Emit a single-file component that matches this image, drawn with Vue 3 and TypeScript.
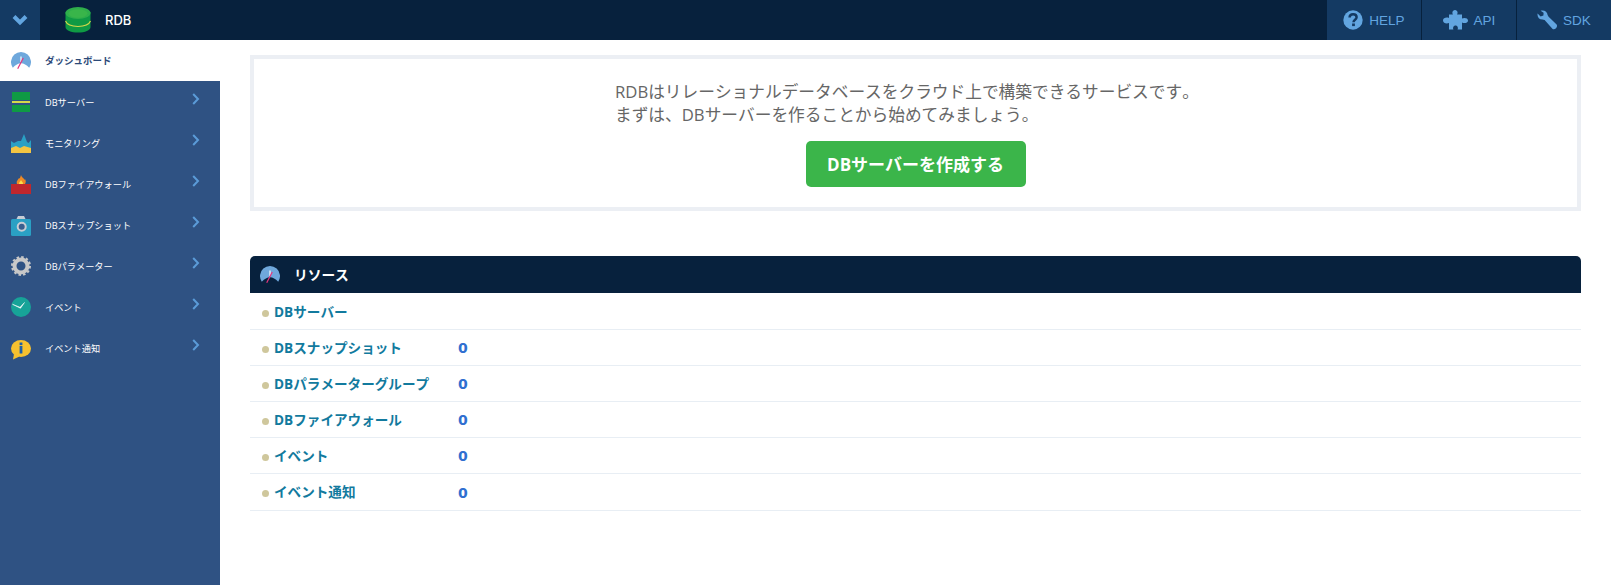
<template>
  <div class="app">
    <header class="topbar">
      <button class="toggle" aria-label="menu">
        <svg width="16" height="12" viewBox="0 0 16 12">
          <path d="M2 2.5 L8 8.5 L14 2.5" fill="none" stroke="#62a5e0" stroke-width="4" />
        </svg>
      </button>
      <div class="brand">
        <svg class="brand-icon" width="26" height="26" viewBox="0 0 26 26">
          <path d="M0.5 5 V20 C0.5 23.5 6 25.5 13 25.5 S25.5 23.5 25.5 20 V5 Z" fill="#0f9a44" />
          <path d="M0.5 14 C2 18 7 19.5 13 19.5 S24 18 25.5 14" fill="none" stroke="#d5d84a" stroke-width="1.2" />
          <ellipse cx="13" cy="6" rx="12.5" ry="6" fill="#2fae4b" />
          <ellipse cx="13" cy="6.5" rx="9.5" ry="4.2" fill="#39b54a" />
        </svg>
        <span class="brand-name">RDB</span>
      </div>
      <nav class="top-links">
        <a class="top-link">
          <svg width="20" height="20" viewBox="0 0 20 20">
            <circle cx="10" cy="10" r="9.7" fill="#62a5e0" />
            <path d="M6.6 7.6 C6.6 5.5 8.2 4.3 10.1 4.3 C12.1 4.3 13.6 5.6 13.6 7.3 C13.6 9.8 10.5 9.8 10.5 12.2" fill="none" stroke="#143a63" stroke-width="2.5" />
            <rect x="9.1" y="13.5" width="2.8" height="2.6" fill="#143a63" />
          </svg>
          <span>HELP</span>
        </a>
        <a class="top-link">
          <svg width="25" height="20" viewBox="0 0 25 20">
            <path d="M6 4.5 H10 C9 3 9 0.5 12 0 C15 0.5 15 3 14 4.5 H19 V8.5 C21 7.5 25 7.8 25 10.5 C25 13.2 21 13.5 19 12.5 V19.5 H14.5 C15.5 18 14.5 15.5 12.5 15.5 C10.5 15.5 9.5 18 10.5 19.5 H6 V13 C4 14 0 13.5 0 10.5 C0 7.5 4 7 6 8 Z" fill="#62a5e0" />
          </svg>
          <span>API</span>
        </a>
        <a class="top-link">
          <svg width="20" height="20" viewBox="0 0 20 20">
            <path d="M0.6 3.6 L3.6 6.4 L6.4 5.4 L6.6 2.8 L3.6 0.7 C7 -0.4 10.4 1.4 10.6 5 L11.6 6.8 L19.6 14.6 C20.4 15.8 20 17 19 18.2 C18 19.4 16.4 19.8 15.4 18.8 L7.6 10 L5.4 9.6 C2 9.4 0 6.8 0.6 3.6 Z" fill="#62a5e0" />
          </svg>
          <span>SDK</span>
        </a>
      </nav>
    </header>

    <div class="body">
      <aside class="sidebar">
        <a class="side-item active">
          <svg class="side-icon" width="20" height="21" viewBox="0 0 20 21">
            <use href="#gauge" />
          </svg>
          <span class="side-label">ダッシュボード</span>
        </a>
        <a v-for="item in menu" :key="item.label" class="side-item">
          <svg class="side-icon" width="20" height="21" viewBox="0 0 20 21">
            <template v-if="item.icon === 'server'">
              <rect x="1" y="1" width="18" height="8" fill="#0f9a44" />
              <rect x="1" y="10" width="18" height="2" fill="#d5d84a" />
              <rect x="1" y="14" width="18" height="7" fill="#0f9a44" />
            </template>
            <template v-else-if="item.icon === 'monitor'">
              <path d="M0 9 L3 11 L7 9 L10 9 L13 2 L16 10 L17.5 11 L20 8 V21 H0 Z" fill="#2aa0c4" />
              <path d="M0 16 L5 14 L9 16 L13 14 L20 16 V21 H0 Z" fill="#f4c542" />
            </template>
            <template v-else-if="item.icon === 'fire'">
              <rect y="11" width="20" height="10" fill="#c0272d" />
              <path d="M6 11 C5 8 7 7 8 5 C9 6 9 5 10 2 C11 5 13 5 13.5 7 L14 6 C15 8 15 9 14 11 Z" fill="#f08a24" />
              <path d="M8 11 C8 9 9 9 10 7 C11 9 12 9 12 11 Z" fill="#fbe14c" />
            </template>
            <template v-else-if="item.icon === 'camera'">
              <rect y="5" width="20" height="17" rx="1.5" fill="#2aa0c4" />
              <path d="M5.5 5 L7 2 H13 L14.5 5 Z" fill="#c7ccd4" />
              <circle cx="10.7" cy="12.7" r="4" fill="#3a5f8f" stroke="#c7ccd4" stroke-width="2" />
            </template>
            <template v-else-if="item.icon === 'gear'">
              <circle cx="10" cy="11" r="6.5" fill="none" stroke="#c8c8c8" stroke-width="4" />
              <circle cx="10" cy="11" r="9" fill="none" stroke="#c8c8c8" stroke-width="2" stroke-dasharray="2.5 2.21" />
            </template>
            <template v-else-if="item.icon === 'clock'">
              <circle cx="10" cy="11" r="10" fill="#17a398" />
              <path d="M1.5 8.3 L9 11.3 L13.5 6.5 L9.5 12.3 Z" fill="#fff" stroke="#fff" stroke-width="0.5" />
            </template>
            <template v-else>
              <ellipse cx="10" cy="11.5" rx="10" ry="8.5" fill="#f6c12f" />
              <path d="M3 17 L2 22.5 L8.5 19.5 Z" fill="#f6c12f" />
              <rect x="8.6" y="5.5" width="2.8" height="2.6" fill="#1d5fa8" />
              <rect x="8.6" y="9" width="2.8" height="7.5" fill="#1d5fa8" />
            </template>
          </svg>
          <span class="side-label">{{ item.label }}</span>
          <svg class="chev" width="8" height="12" viewBox="0 0 8 12">
            <path d="M1.2 1 L6 6 L1.2 11" fill="none" stroke="#5b9bd8" stroke-width="2" />
          </svg>
        </a>
      </aside>

      <main class="content">
        <section class="notice">
          <div class="notice-text">
            <p>RDBはリレーショナルデータベースをクラウド上で構築できるサービスです。</p>
            <p>まずは、DBサーバーを作ることから始めてみましょう。</p>
          </div>
          <button class="create-btn">DBサーバーを作成する</button>
        </section>

        <section class="resources">
          <div class="res-head">
            <svg class="head-icon" width="20" height="21" viewBox="0 0 20 21">
              <use href="#gauge" />
            </svg>
            <span>リソース</span>
          </div>
          <div class="res-list">
            <div v-for="row in rows" :key="row.label" class="res-row">
              <i class="dot"></i>
              <a class="res-name">{{ row.label }}</a>
              <span class="res-count">{{ row.count }}</span>
            </div>
          </div>
        </section>
      </main>
    </div>

    <svg width="0" height="0" class="defs">
      <symbol id="gauge" viewBox="0 0 20 21">
        <path d="M1.8 17.8 A10 10 0 1 1 18.2 17.8 Q10 8.5 1.8 17.8 Z" fill="#6fa8dc" />
        <path d="M10 6.5 V12" stroke="#fff" stroke-width="1.2" />
        <path d="M6.7 18.7 L12.3 8" stroke="#e8357d" stroke-width="1.2" />
      </symbol>
    </svg>
  </div>
</template>

<script setup lang="ts">
  interface MenuItem {
    label: string;
    icon: string;
  }

  interface ResourceRow {
    label: string;
    count: string;
  }

  const menu: MenuItem[] = [
    { label: "DBサーバー", icon: "server" },
    { label: "モニタリング", icon: "monitor" },
    { label: "DBファイアウォール", icon: "fire" },
    { label: "DBスナップショット", icon: "camera" },
    { label: "DBパラメーター", icon: "gear" },
    { label: "イベント", icon: "clock" },
    { label: "イベント通知", icon: "info" },
  ];

  const rows: ResourceRow[] = [
    { label: "DBサーバー", count: "" },
    { label: "DBスナップショット", count: "0" },
    { label: "DBパラメーターグループ", count: "0" },
    { label: "DBファイアウォール", count: "0" },
    { label: "イベント", count: "0" },
    { label: "イベント通知", count: "0" },
  ];
</script>

<style scoped>
  .app {
    height: 585px;
    display: flex;
    flex-direction: column;
    overflow: hidden;
    font-family: "Open Sans", "Noto Sans CJK JP", sans-serif;
    font-kerning: none;
  }

  .topbar {
    height: 40px;
    flex: none;
    display: flex;
    align-items: stretch;
    background: #07213d;
  }

  .toggle {
    width: 40px;
    border: none;
    padding: 0;
    background: #143a63;
    display: flex;
    align-items: center;
    justify-content: center;
  }

  .brand {
    display: flex;
    align-items: center;
    gap: 14px;
    margin-left: 25px;
  }

  .brand-name {
    color: #fff;
    font-size: 13px;
    font-weight: 500;
    font-family: "Inter", sans-serif;
  }

  .top-links {
    margin-left: auto;
    display: flex;
  }

  .top-link {
    width: 95px;
    height: 40px;
    box-sizing: border-box;
    display: flex;
    align-items: center;
    justify-content: center;
    gap: 6px;
    background: #143a63;
    color: #62a5e0;
    font-size: 13.5px;
    font-family: "Liberation Sans", sans-serif;
    border-left: 1px solid #07213d;
  }

  .body {
    flex: 1;
    display: flex;
    min-height: 0;
  }

  .sidebar {
    width: 220px;
    flex: none;
    background: #2f5283;
  }

  .side-item {
    height: 41px;
    display: flex;
    align-items: center;
    color: #fff;
    font-size: 9.2px;
    padding-left: 11px;
    padding-right: 20px;
  }

  .side-item.active {
    background: #fff;
    color: #2c4a78;
    font-size: 9.5px;
    font-weight: 700;
  }

  .side-icon {
    flex: none;
    overflow: visible;
  }

  .side-label {
    margin-left: 14px;
  }

  .active .side-label {
    margin-top: -1px;
  }

  .chev {
    margin-left: auto;
    margin-top: -6px;
  }

  .content {
    flex: 1;
    padding: 15px 30px 0;
    min-width: 0;
  }

  .notice {
    height: 156px;
    box-sizing: border-box;
    border: 4px solid #eceff4;
    display: flex;
    flex-direction: column;
    align-items: center;
    padding-top: 21px;
  }

  .notice-text {
    color: #666;
    font-size: 16.7px;
    line-height: 23px;
    align-self: flex-start;
    margin-left: 361px;
    white-space: nowrap;
  }

  .notice-text p {
    margin: 0;
  }

  .create-btn {
    width: 220px;
    height: 46px;
    margin-top: 15px;
    padding: 0 0 2px;
    border: none;
    border-radius: 5px;
    background: #3bb54a;
    color: #fff;
    font-family: inherit;
    font-size: 17px;
    font-weight: 700;
  }

  .resources {
    margin-top: 45px;
  }

  .res-head {
    height: 37px;
    background: #07213d;
    border-radius: 5px 5px 0 0;
    display: flex;
    align-items: center;
    gap: 14px;
    padding-left: 10px;
    color: #fff;
    font-size: 13.7px;
    font-weight: 700;
  }

  .head-icon {
    overflow: visible;
  }

  .res-head span {
    margin-top: -2px;
  }

  .res-list {
    padding-top: 1px;
  }

  .res-row {
    height: 36.1px;
    box-sizing: border-box;
    display: flex;
    align-items: center;
    border-bottom: 1px solid #e8eef4;
    padding-left: 12px;
    font-size: 13.6px;
    font-weight: 700;
  }

  .dot {
    width: 7px;
    height: 7px;
    border-radius: 50%;
    background: #cfc79c;
    margin-right: 5px;
    margin-top: 3px;
    flex: none;
  }

  .res-name {
    width: 184px;
    margin-top: -2px;
    color: #127a9e;
    white-space: nowrap;
  }

  .res-count {
    color: #2f6fd0;
    font-family: "DejaVu Sans", sans-serif;
    font-size: 14px;
    margin-top: 1px;
  }

  .defs {
    position: absolute;
  }
</style>
